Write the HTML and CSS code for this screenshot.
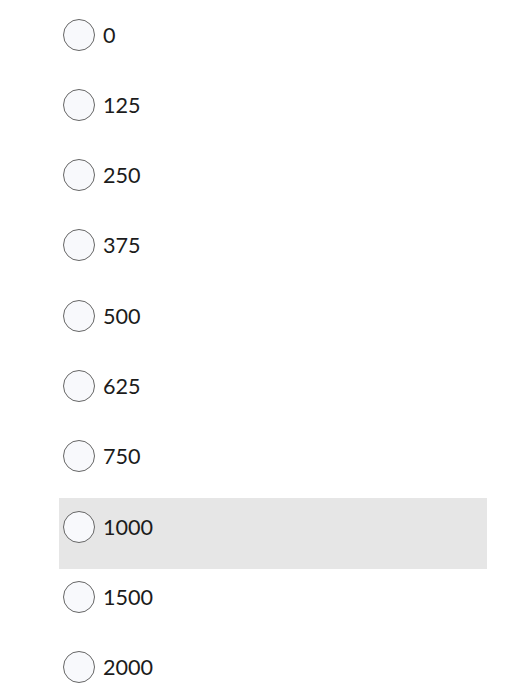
FILE: index.html
```html
<!DOCTYPE html>
<html>
<head>
<meta charset="utf-8">
<link rel="stylesheet" href="styles.css">
</head>
<body>
<div class="list">
  <label class="opt"><span class="radio"></span><span class="txt">0</span></label>
  <label class="opt"><span class="radio"></span><span class="txt">125</span></label>
  <label class="opt"><span class="radio"></span><span class="txt">250</span></label>
  <label class="opt"><span class="radio"></span><span class="txt">375</span></label>
  <label class="opt"><span class="radio"></span><span class="txt">500</span></label>
  <label class="opt"><span class="radio"></span><span class="txt">625</span></label>
  <label class="opt"><span class="radio"></span><span class="txt">750</span></label>
  <label class="opt hover"><span class="radio"></span><span class="txt">1000</span></label>
  <label class="opt"><span class="radio"></span><span class="txt">1500</span></label>
  <label class="opt"><span class="radio"></span><span class="txt">2000</span></label>
</div>
</body>
</html>
```
FILE: styles.css
```css
html, body {
  margin: 0;
  padding: 0;
  background: #ffffff;
}
body {
  font-family: Lato, "Liberation Sans", sans-serif;
  color: #1c1c1c;
}
.list {
  display: flex;
  flex-direction: column;
  padding-top: 6px;
  margin-left: 59px;
  width: 428px;
}
.opt {
  display: flex;
  align-items: flex-start;
  gap: 8px;
  height: 70.33px;
  box-sizing: border-box;
  padding: 12.5px 0 0 4px;
}
.opt.hover {
  background: #e6e6e6;
}
.radio {
  width: 32px;
  height: 32px;
  box-sizing: border-box;
  border: 1.6px solid #666666;
  border-radius: 50%;
  background: #f8f9fc;
  flex: none;
}
.txt {
  font-size: 21.6px;
  line-height: 33px;
}
```
